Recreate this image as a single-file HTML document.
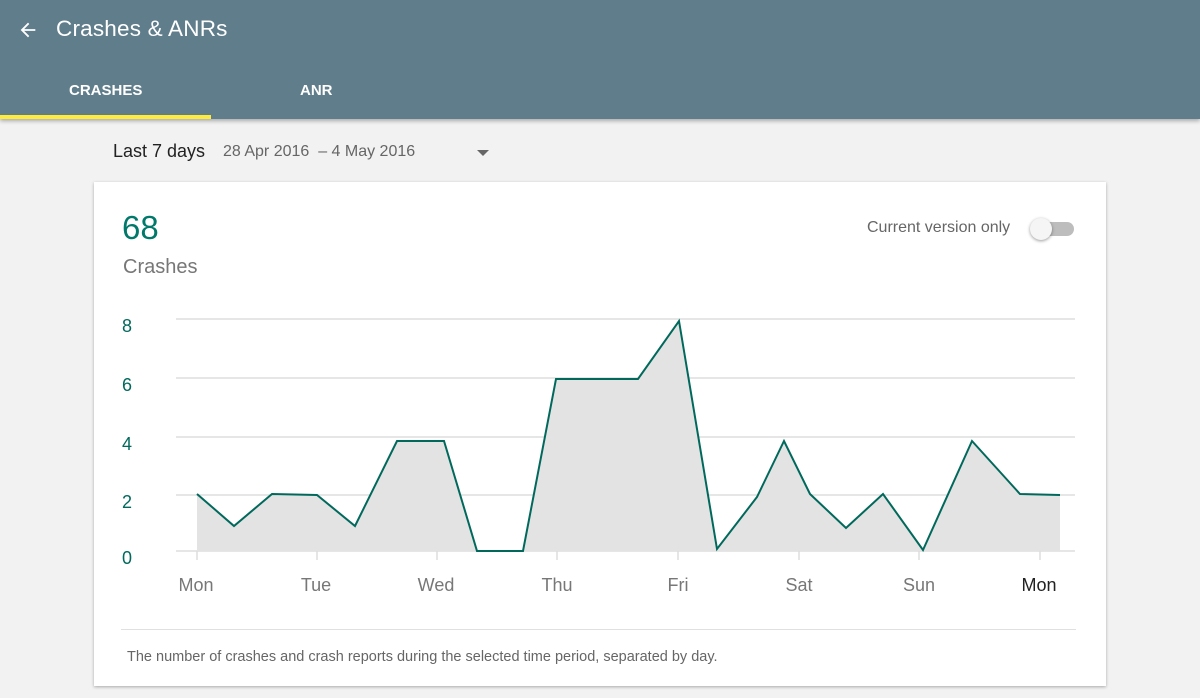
<!DOCTYPE html>
<html><head><meta charset="utf-8"><style>
body{margin:0;width:1200px;height:698px;background:#f2f2f2;font-family:"Liberation Sans",Roboto,sans-serif;position:relative;overflow:hidden}
.bar{position:absolute;left:0;top:0;width:1200px;height:119px;background:#607d8b;box-shadow:0 2px 4px rgba(0,0,0,.3)}
.t{position:absolute;color:#fff}
.card{position:absolute;left:94px;top:182px;width:1012px;height:504px;background:#fff;box-shadow:0 1px 3px rgba(0,0,0,.3)}
</style></head><body>
<div class="bar">
<svg style="position:absolute;left:17px;top:19px" width="22" height="22" viewBox="0 0 24 24"><path d="M20 11H7.8l5.6-5.6L12 4l-8 8 8 8 1.4-1.4L7.8 13H20z" fill="#fff"/></svg>
<div class="t" style="left:56px;top:16px;font-size:22.5px;letter-spacing:0.2px">Crashes &amp; ANRs</div>
<div class="t" style="left:69px;top:82px;font-size:15px;font-weight:bold">CRASHES</div>
<div class="t" style="left:300px;top:82px;font-size:15px;font-weight:bold">ANR</div>
<div style="position:absolute;left:0;top:115px;width:211px;height:4px;background:#ffeb3b"></div>
</div>
<div style="position:absolute;left:113px;top:141px;font-size:18px;color:#222">Last 7 days</div>
<div style="position:absolute;left:223px;top:143px;font-size:16px;color:#666">28 Apr 2016 &nbsp;– 4 May 2016</div>
<div style="position:absolute;left:477px;top:150px;border:6px solid transparent;border-top:6px solid #666;border-bottom:0"></div>
<div class="card">
<div style="position:absolute;left:28px;top:27px;font-size:33px;color:#00796b">68</div>
<div style="position:absolute;left:29px;top:74px;font-size:20px;color:#777">Crashes</div>
<div style="position:absolute;left:773px;top:37px;font-size:16px;color:#666">Current version only</div>
<div style="position:absolute;left:940px;top:40px;width:40px;height:14px;border-radius:7px;background:#bdbdbd"></div>
<div style="position:absolute;left:936px;top:36px;width:22px;height:22px;border-radius:50%;background:#f5f5f5;box-shadow:0 1px 3px rgba(0,0,0,.4)"></div>
<div style="position:absolute;left:27px;top:447px;width:955px;height:1px;background:#e0e0e0"></div>
<div style="position:absolute;left:33px;top:467px;font-size:14.5px;color:#666">The number of crashes and crash reports during the selected time period, separated by day.</div>
</div>
<svg style="position:absolute;left:0;top:0" width="1200" height="698">
<g stroke="#ddd" stroke-width="1.5"><line x1="176" y1="319" x2="1075" y2="319"/><line x1="176" y1="378" x2="1075" y2="378"/><line x1="176" y1="437" x2="1075" y2="437"/><line x1="176" y1="495" x2="1075" y2="495"/><line x1="176" y1="551" x2="1075" y2="551"/></g>
<polygon fill="#e3e3e3" points="197,551 197,494 234,526 272,494 317,495 355,526 397,441 444,441 477,551 523,551 556,379 638,379 679,321 717,549 757,497 784,441 810,494 846,528 883,494 923,550 972,441 1020,494 1060,495 1060,551"/>
<polyline fill="none" stroke="#00695c" stroke-width="2" points="197,494 234,526 272,494 317,495 355,526 397,441 444,441 477,551 523,551 556,379 638,379 679,321 717,549 757,497 784,441 810,494 846,528 883,494 923,550 972,441 1020,494 1060,495"/>
<g stroke="#ddd" stroke-width="1.5"><line x1="197" y1="551" x2="197" y2="560"/><line x1="317" y1="551" x2="317" y2="560"/><line x1="437" y1="551" x2="437" y2="560"/><line x1="557" y1="551" x2="557" y2="560"/><line x1="678" y1="551" x2="678" y2="560"/><line x1="799" y1="551" x2="799" y2="560"/><line x1="919" y1="551" x2="919" y2="560"/><line x1="1040" y1="551" x2="1040" y2="560"/></g>
<g font-family="Liberation Sans,sans-serif" font-size="18" fill="#00695c"><text x="122" y="332">8</text><text x="122" y="391">6</text><text x="122" y="450">4</text><text x="122" y="508">2</text><text x="122" y="564">0</text></g>
<g font-family="Liberation Sans,sans-serif" font-size="18" fill="#777" text-anchor="middle"><text x="196" y="591">Mon</text><text x="316" y="591">Tue</text><text x="436" y="591">Wed</text><text x="557" y="591">Thu</text><text x="678" y="591">Fri</text><text x="799" y="591">Sat</text><text x="919" y="591">Sun</text><text x="1039" y="591" fill="#222">Mon</text></g>
</svg>
</body></html>
